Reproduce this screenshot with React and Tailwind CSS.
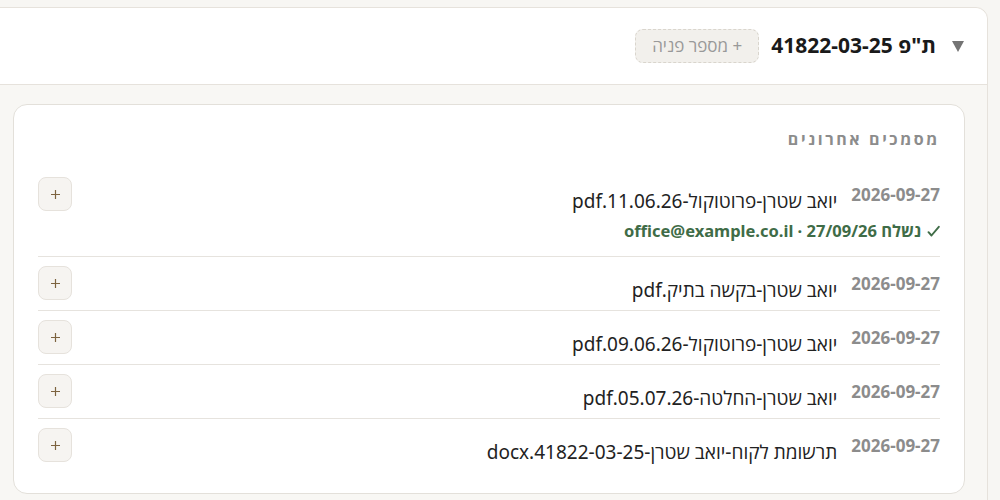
const docs = [
  {
    date: "2026-09-27",
    name: "יואב שטרן-פרוטוקול-11.06.26.pdf",
    sent: "נשלח 27/09/26 · office@example.co.il",
  },
  { date: "2026-09-27", name: "יואב שטרן-בקשה בתיק.pdf" },
  { date: "2026-09-27", name: "יואב שטרן-פרוטוקול-09.06.26.pdf" },
  { date: "2026-09-27", name: "יואב שטרן-החלטה-05.07.26.pdf" },
  { date: "2026-09-27", name: "תרשומת לקוח-יואב שטרן-41822-03-25.docx" },
];

function PlusIcon() {
  return (
    <svg width="11" height="11" viewBox="0 0 11 11" fill="none">
      <path d="M5.5 1v9M1 5.5h9" stroke="#7d6340" strokeWidth="1.2" />
    </svg>
  );
}

function CheckIcon() {
  return (
    <svg width="13" height="13" viewBox="0 0 13 13" fill="none">
      <path
        d="M1.5 7.2l3 3.3L11.8 1.8"
        stroke="#3f6c47"
        strokeWidth="1.9"
        strokeLinecap="round"
        strokeLinejoin="round"
      />
    </svg>
  );
}

function DocRow({ doc, last }) {
  return (
    <div
      className={
        "flex items-start pt-[9px] pb-[6px] " +
        (last ? "" : "border-b border-[#e6e3de]")
      }
    >
      <div className="flex flex-col">
        <div className="flex items-start gap-[14px]">
          <span className="mt-[8px] text-[17px] leading-5 font-bold text-[#8c8c8c]">
            {doc.date}
          </span>
          <span className="mt-[10px] text-[19px] leading-7 text-[#222]">
            {doc.name}
          </span>
        </div>
        {doc.sent && (
          <div className="mt-[6px] mb-[9px] flex items-center gap-[6px] text-[16.5px] leading-5 font-bold text-[#3f6c47]">
            <CheckIcon />
            <span>{doc.sent}</span>
          </div>
        )}
      </div>
      <button className="ms-auto flex h-[34px] w-[34px] items-center justify-center rounded-lg border border-[#e6e2dc] bg-[#f6f4f1]">
        <PlusIcon />
      </button>
    </div>
  );
}

export default function App() {
  return (
    <div
      dir="rtl"
      className="h-[500px] overflow-hidden bg-[#f7f6f3] pt-[7px] pr-[12px]"
      style={{ fontFamily: '"Noto Sans", "Open Sans", "DejaVu Sans", sans-serif' }}
    >
      <div className="ml-[-10px] rounded-tr-xl border border-[#e6e2dc] bg-[#f8f7f4]">
        {/* case header */}
        <div className="flex h-[77px] items-center gap-3 rounded-tr-xl border-b border-[#e6e2dc] bg-white pr-[23px]">
          <svg width="12" height="11" viewBox="0 0 12 11" className="ml-1">
            <path d="M0 0h12L6 11z" fill="#747474" />
          </svg>
          <h1 className="text-[21px] font-bold text-[#1a1a1a]">ת"פ 41822-03-25</h1>
          <span className="flex h-[34px] items-center rounded-lg border border-dashed border-[#d9d5cd] bg-[#f2f0ec] px-[16px] text-[17px] text-[#999]">
            + מספר פניה
          </span>
        </div>

        {/* recent documents */}
        <div className="px-[22px] pt-[19px] pb-6">
          <div className="rounded-[14px] border border-[#e3e0da] bg-white px-6 pt-6 pb-[21px]">
            <h2 className="text-[16px] leading-5 font-bold tracking-[2.6px] text-[#8c8c8c]">
              מסמכים אחרונים
            </h2>
            <div className="mt-[19px]">
              {docs.map((d, i) => (
                <DocRow key={i} doc={d} last={i === docs.length - 1} />
              ))}
            </div>
          </div>
        </div>
      </div>
    </div>
  );
}
